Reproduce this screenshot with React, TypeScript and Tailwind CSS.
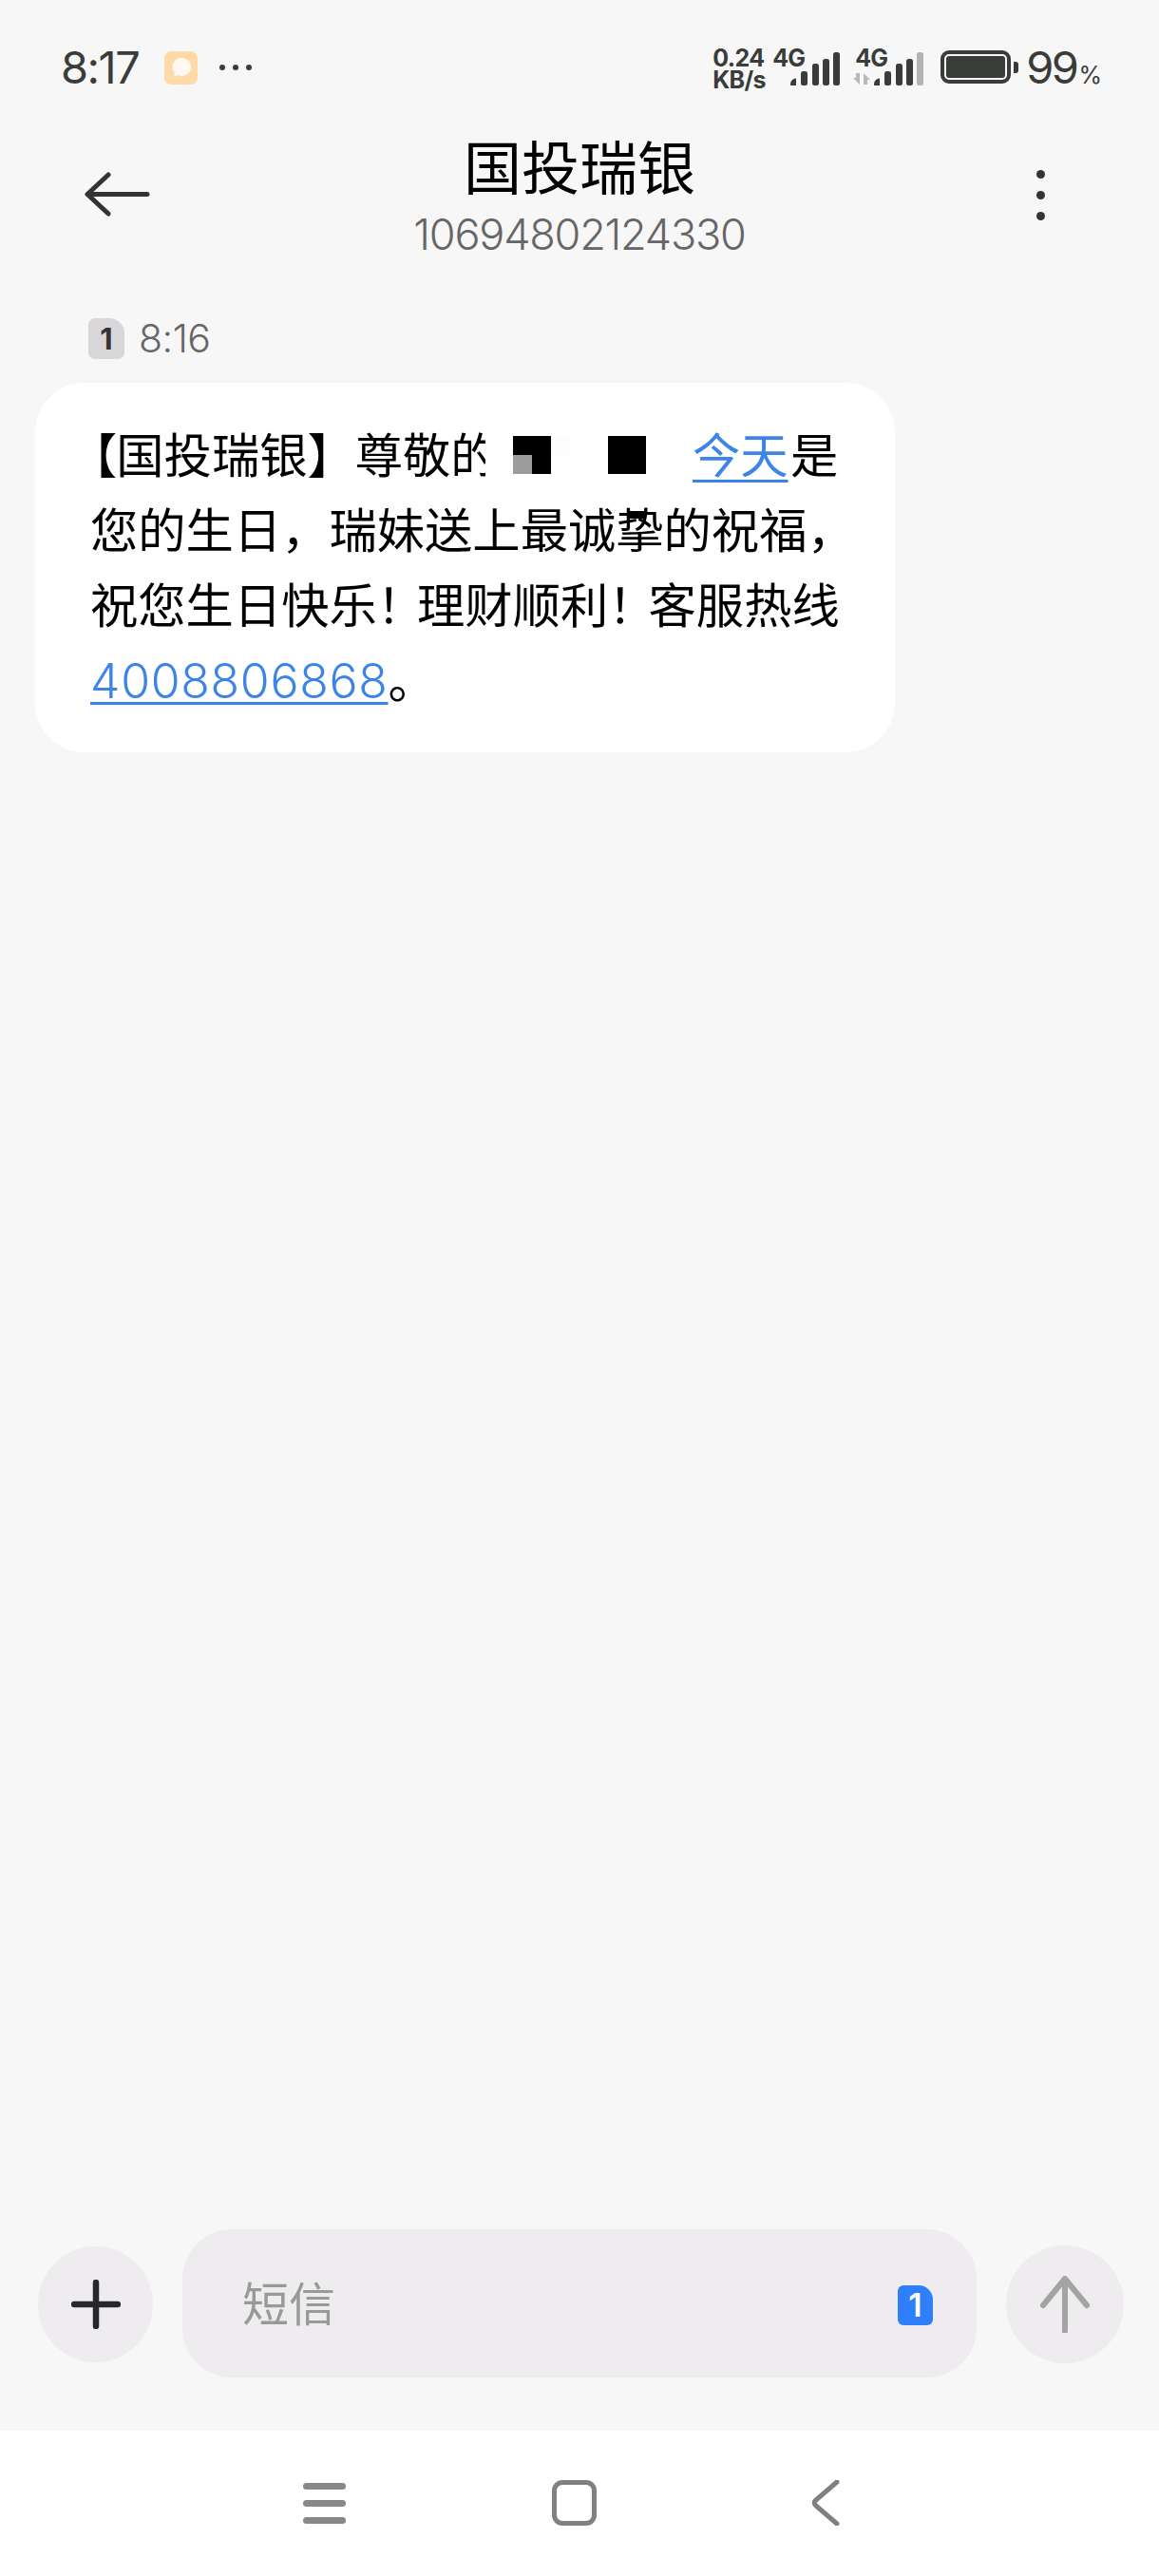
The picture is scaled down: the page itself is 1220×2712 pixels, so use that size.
const cjk = { fontFamily: '"Noto Sans CJK SC", "Noto Sans", sans-serif' };

function Bars({ last }: { last: string }) {
  return (
    <svg width="54" height="36" viewBox="0 0 54 36" className="block">
      <path d="M1 33.500a6 6 0 0 1 6-6v7.500H1z" fill="#3a3c3a" />
      <rect x="12" y="20" width="7" height="15" rx="2.500" fill="#3a3c3a" />
      <rect x="24" y="12" width="7" height="23" rx="2.500" fill="#3a3c3a" />
      <rect x="35" y="7" width="7" height="28" rx="2.500" fill="#3a3c3a" />
      <rect x="46" y="0" width="7" height="35" rx="2.500" fill={last} />
    </svg>
  );
}

export default function App() {
  return (
    <div className="w-[1220px] h-[2712px] bg-[#f7f7f7] flex flex-col overflow-hidden" style={cjk}>
      {/* status bar */}
      <div className="h-[142px] pt-[49px] pl-[64px] pr-[60px] flex items-start justify-between text-[#3a3c3a] shrink-0">
        <div className="flex items-center h-[44px]">
          <span className="font-['Inter'] text-[47px] leading-[44px] tracking-[-1.5px] w-[109px]">8:17</span>
          <div className="w-[35px] h-[35px] rounded-[7px] bg-[#ffd9a8] flex items-center justify-center">
            <svg width="22" height="22" viewBox="0 0 22 22">
              <path d="M11 1a10 9.500 0 1 1-4.500 18L3 21l.9-4.200A9.500 9.500 0 0 1 11 1z" fill="#fffaf0" />
            </svg>
          </div>
          <div className="flex gap-[8px] ml-[23px]">
            <span className="w-[6px] h-[6px] rounded-full bg-[#3a3c3a]" />
            <span className="w-[6px] h-[6px] rounded-full bg-[#3a3c3a]" />
            <span className="w-[6px] h-[6px] rounded-full bg-[#3a3c3a]" />
          </div>
        </div>
        <div className="flex items-start">
          <div className="font-['Inter'] font-bold text-[25px] leading-[23px] w-[63px] pt-px tracking-[-0.6px]">
            <div>0.24</div>
            <div>KB/s</div>
          </div>
          <div className="relative w-[70px] h-[44px]">
            <span className="absolute left-0 top-0 font-['Inter'] font-bold text-[25px] leading-[25px] tracking-[-0.8px]">4G</span>
            <div className="absolute left-[18px] top-[6px]"><Bars last="#3a3c3a" /></div>
          </div>
          <div className="relative w-[88px] h-[44px] ml-[16px]">
            <span className="absolute left-[1px] top-0 font-['Inter'] font-bold text-[25px] leading-[25px] tracking-[-0.8px]">4G</span>
            <svg width="18" height="12" viewBox="0 0 18 12" className="absolute left-[-1px] top-[28px]">
              <path d="M0 5h3V0h4v12zM18 7h-3v5h-4V0z" fill="#b8b8b8" />
            </svg>
            <div className="absolute left-[20px] top-[6px]"><Bars last="#b3b3b3" /></div>
          </div>
          <div className="flex items-center h-[35px] mt-[4px] ml-[3px]">
            <div className="w-[74px] h-[35px] rounded-[9px] border-[4px] border-[#3a3c3a] p-[2px]">
              <div className="w-full h-full rounded-[3px] bg-[#3a3c3a]" />
            </div>
            <div className="w-[5px] h-[12px] ml-[3px] rounded-r-[3px] bg-[#3a3c3a]" />
          </div>
          <span className="font-['Inter'] text-[47px] leading-[44px] ml-[8px] tracking-[-2.5px]">99</span>
          <span className="font-['Inter'] text-[25px] leading-[25px] mt-[18px] ml-[2px]">%</span>
        </div>
      </div>

      {/* header */}
      <div className="relative h-[130px] shrink-0 flex flex-col items-center">
        <div className="text-[61px] leading-[70px] text-black mt-[-3px]">国投瑞银</div>
        <div className="font-['Inter'] font-light text-[45px] leading-[50px] text-[#666] tracking-[-1.2px] mt-[13px]">10694802124330</div>
        <svg width="70" height="48" viewBox="0 0 70 48" className="absolute left-[89px] top-[39px]">
          <path d="M66 23.500H3M25 3 3 23.500 25 44" fill="none" stroke="#333" strokeWidth="5" strokeLinecap="round" strokeLinejoin="round" />
        </svg>
        <div className="absolute left-[1091px] top-[37px] flex flex-col gap-[13px]">
          <span className="w-[9px] h-[9px] rounded-full bg-[#333]" />
          <span className="w-[9px] h-[9px] rounded-full bg-[#333]" />
          <span className="w-[9px] h-[9px] rounded-full bg-[#333]" />
        </div>
      </div>

      {/* messages */}
      <div className="flex-1 px-[37px] pt-[63px]">
        <div className="flex items-center h-[43px] pl-[56px] gap-[15px]">
          <div className="w-[38px] h-[43px] rounded-[7px] rounded-tr-[16px] bg-[#d9d6d9] flex items-center justify-center font-['Inter'] font-bold text-[31px] leading-none text-[#333]">1</div>
          <span className="font-['Inter'] font-light text-[41px] leading-[43px] text-[#666] tracking-[-0.5px]">8:16</span>
        </div>
        <div className="relative w-[905px] h-[389px] mt-[25px] bg-white rounded-[52px] pl-[58px] pt-[34px] text-[50.300px] leading-[79px] text-black whitespace-nowrap overflow-hidden">
          <div>
            <span className="ml-[-22px] mr-[-1px]">【</span>国投瑞银】尊敬的
          </div>
          <div>您的生日，瑞妹送上最诚挚的祝福，</div>
          <div>
            祝您生日快乐<span className="tracking-[-8px]">！</span>理财顺利<span className="tracking-[-8px]">！</span>客服热线
          </div>
          <div>
            <span className="font-['Inter'] font-light text-[50px] tracking-[0.7px] text-[#3c84e8] underline decoration-[3px] underline-offset-[4px] [text-decoration-skip-ink:none]">4008806868</span>。
          </div>

          {/* redaction of the recipient's name */}
          <div className="absolute left-[474px] top-[30px] w-[221px] h-[72px] bg-white" />
          <div className="absolute left-[503px] top-[56px] w-[40px] h-[40px] bg-black" />
          <div className="absolute left-[503px] top-[76px] w-[20px] h-[20px] bg-[#9c9c9c]" />
          <div className="absolute left-[543px] top-[56px] w-[20px] h-[20px] bg-[#fffcff]" />
          <div className="absolute left-[603px] top-[56px] w-[40px] h-[40px] bg-black" />
          <span className="absolute left-[692px] top-[34px] text-[#3c84e8] underline decoration-[3px] underline-offset-[7px] [text-decoration-skip-ink:none]">今天</span>
          <span className="absolute left-[795px] top-[34px]">是</span>
          <div className="absolute left-[623px] top-[135px] w-[20px] h-[8px] bg-black" />
        </div>
      </div>

      {/* composer */}
      <div className="h-[212px] shrink-0 flex items-start pl-[40px] pr-[37px]">
        <div className="w-[121px] h-[122px] mt-[18px] rounded-full bg-[#efecef] flex items-center justify-center">
          <svg width="52" height="52" viewBox="0 0 52 52">
            <path d="M26 3v46M3 26h46" stroke="#26282a" strokeWidth="6.500" strokeLinecap="round" />
          </svg>
        </div>
        <div className="w-[836px] h-[156px] ml-[31px] rounded-[52px] bg-[#efecef] flex items-center justify-between pl-[63px] pr-[46px]">
          <span className="text-[49px] leading-[60px] text-[#999] mt-[-4px]">短信</span>
          <div className="w-[37px] h-[42px] mt-[3px] rounded-[6px] rounded-tr-[15px] bg-[#2f7ffb] flex items-center justify-center font-['Inter'] font-semibold text-[34px] leading-none text-white">1</div>
        </div>
        <div className="w-[124px] h-[124px] ml-[31px] mt-[17px] rounded-full bg-[#efecef] flex items-center justify-center">
          <svg width="52" height="60" viewBox="0 0 52 60">
            <path d="M26 58V4M3 31 26 3l23 28" fill="none" stroke="#a3a3a3" strokeWidth="6" strokeLinecap="round" strokeLinejoin="round" />
          </svg>
        </div>
      </div>

      {/* nav bar */}
      <div className="h-[153px] shrink-0 bg-white flex items-start pt-[52px] pl-[319px]">
        <div className="w-[45px] h-[43px] mt-[3px] flex flex-col justify-between">
          <span className="h-[7px] rounded-full bg-[#888]" />
          <span className="h-[7px] rounded-full bg-[#888]" />
          <span className="h-[7px] rounded-full bg-[#888]" />
        </div>
        <div className="w-[47px] h-[48px] ml-[217px] rounded-[11px] border-[5px] border-[#808080]" />
        <svg width="30" height="48" viewBox="0 0 30 48" className="ml-[226px]">
          <path d="M27 2 5 21a3.500 3.500 0 0 0 0 6l22 19" fill="none" stroke="#808080" strokeWidth="5" strokeLinecap="round" />
        </svg>
      </div>
    </div>
  );
}
